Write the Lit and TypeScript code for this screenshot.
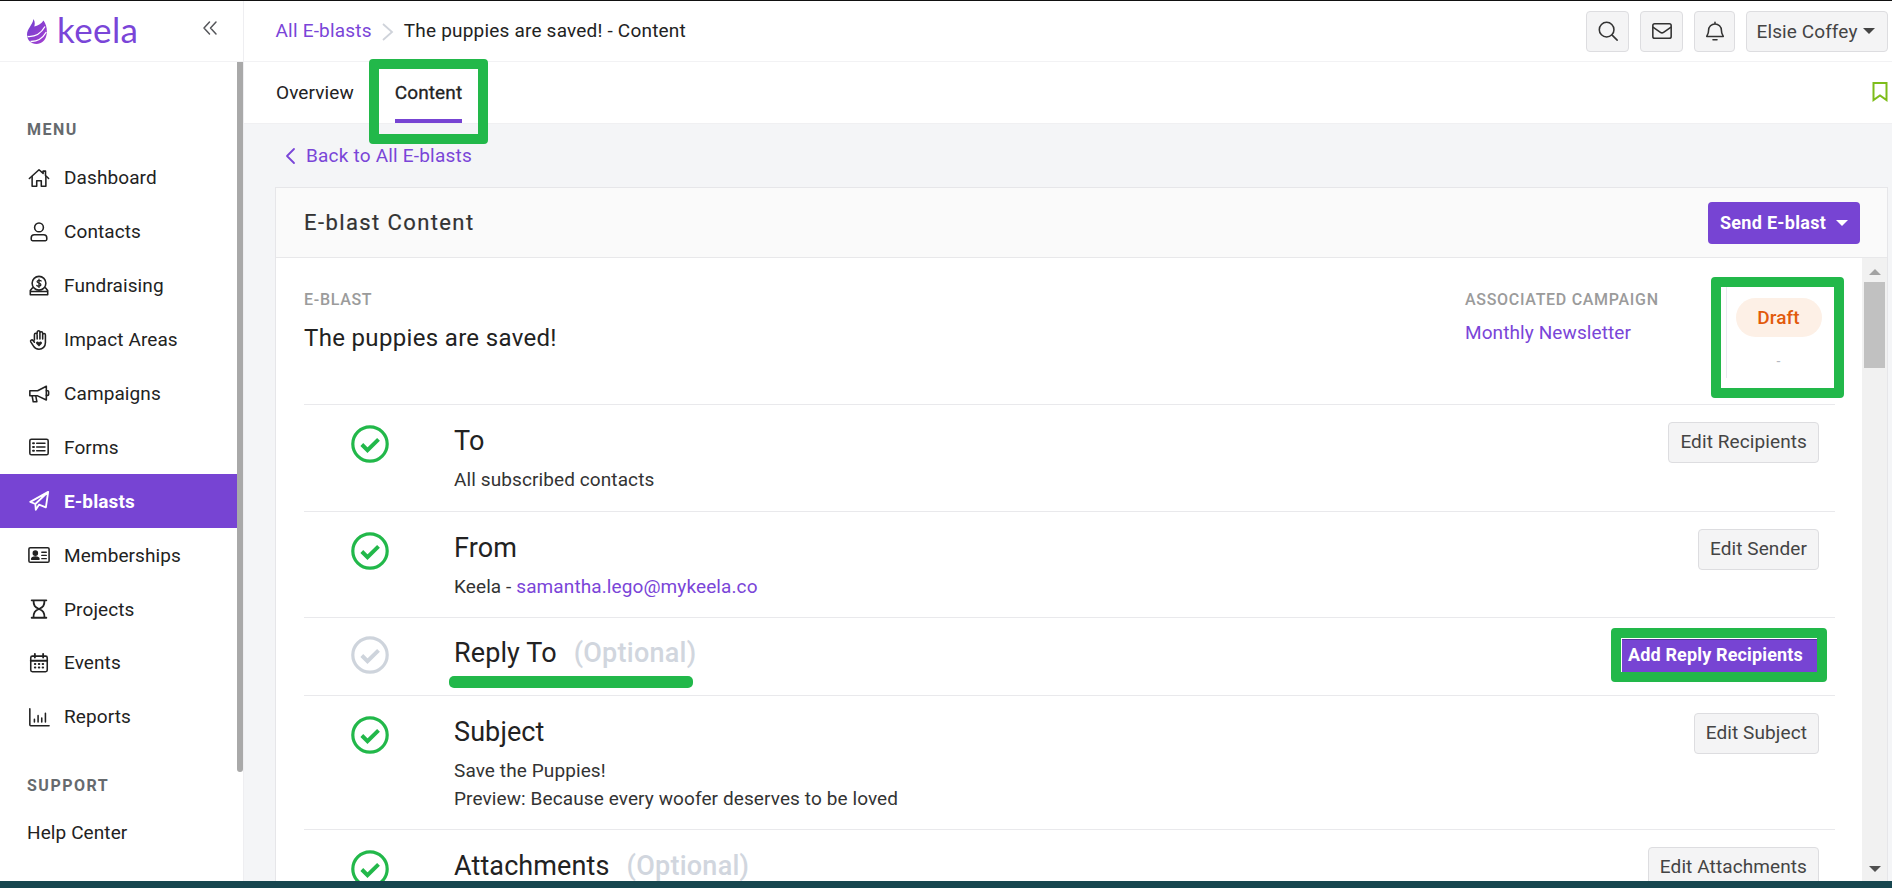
import { LitElement, html, css, svg } from "lit";
import { customElement } from "lit/decorators.js";

const S = (body: unknown, size = 22, cls = "") => html`<svg class=${cls} width=${size} height=${size} viewBox="0 0 24 24" fill="none" stroke="currentColor" stroke-width="1.7" stroke-linecap="round" stroke-linejoin="round">${body}</svg>`;

const icons: Record<string, unknown> = {
  home: svg`<path d="M1.5 12.5 12 3l4.500 4V4.500h2.600v4.800l3.400 3.200"/><path d="M4.500 10.500V21h5v-6h5v6h5V10.500"/>`,
  user: svg`<circle cx="12" cy="7" r="4.800"/><path d="M3.500 20v-1.500A3.500 3.500 0 0 1 7 15h10a3.500 3.500 0 0 1 3.500 3.500V20a1.500 1.500 0 0 1-1.500 1.500H5A1.500 1.500 0 0 1 3.500 20Z"/>`,
  money: svg`<circle cx="12" cy="9" r="7.500"/><path d="M14.300 6.500c-.6-.8-3.900-1.200-4.400.6-.5 2 4.400 1.600 4.200 3.700-.2 1.800-3.500 1.600-4.500.6M12 4.500v9" stroke-width="1.400"/><path d="M5 14l-2.500 3v4.500h19V17L19 14M2.500 18h19"/>`,
  hand: svg`<path d="M7 12V6.200a1.500 1.500 0 0 1 3 0V11M10 5V3.500a1.500 1.500 0 0 1 3 0V11M13 4.500a1.500 1.500 0 0 1 3 0V11M16 6.500a1.500 1.500 0 0 1 3 0V15c0 4-3 7-7 7-3 0-4.800-1.200-6-3.300L3 14c-.9-1.600 1.300-3 2.500-1.500L7 14.500"/><path d="M12 19l-3-3c-1.200-1.800 1.800-3.500 3-1.400 1.200-2.100 4.200-.4 3 1.400Z" fill="currentColor" stroke="none"/>`,
  megaphone: svg`<path d="M2 8.500h8.500L20 3.500v15l-9.500-4.500H2Z"/><path d="M4.500 14l1.200 6.500h4L8.500 14M20 8.500h1.500a1 1 0 0 1 1 1v3a1 1 0 0 1-1 1H20"/>`,
  form: svg`<rect x="2" y="3.500" width="20" height="17" rx="1.800"/><path d="M9.500 8h9M9.500 12h9M9.500 16h9" /><path d="M5.500 8h1M5.500 12h1M5.500 16h1" stroke-width="2.200"/>`,
  plane: svg`<path d="M22 2 2.500 13l5.500 2.300L22 2Zm0 0-2.500 17-7.500-3-3.500 5.500-.5-6.200" stroke-width="2"/>`,
  card: svg`<rect x="1" y="4" width="22" height="16" rx="1.500"/><circle cx="8" cy="10" r="2.200" fill="currentColor"/><path d="M4 16.500c.4-3 7.600-3 8 0Z" fill="currentColor"/><path d="M15 9h5M15 12.500h5M15 16h5" stroke-width="1.400"/>`,
  hourglass: svg`<path d="M4 2.500h16M4 21.500h16M6 2.500c0 6 1.500 7.500 6 9.500 4.500-2 6-3.500 6-9.500M6 21.500c0-6 1.500-7.500 6-9.500 4.500 2 6 3.500 6 9.500" stroke-width="2"/>`,
  calendar: svg`<rect x="3" y="4.500" width="18" height="17" rx="1.800"/><path d="M3 9.500h18M7.500 2v4M16.500 2v4" stroke-width="2"/><path d="M7.500 13h.5M11.800 13h.5M16 13h.5M7.500 17h.5M11.800 17h.5M16 17h.5" stroke-width="2.200"/>`,
  chart: svg`<path d="M2 3v17.500a1 1 0 0 0 1 1h20M7 14.500v3M11 10.500v7M15 13v4.500M19 8v9.500"/>`,
  search: svg`<circle cx="10.500" cy="10.500" r="8"/><path d="m16.500 16.500 5.500 5.500"/>`,
  mail: svg`<rect x="2" y="4" width="20" height="16" rx="2"/><path d="m2.500 8 7.800 5.500a3 3 0 0 0 3.400 0L21.500 8"/>`,
  bell: svg`<path d="M12 2.500v1.800M12 4.300a7 7 0 0 0-7 7c0 4.500-2 5.200-2 6.700h18c0-1.500-2-2.200-2-6.700a7 7 0 0 0-7-7ZM9.800 21.500h4.400"/>`,
};

const nav: [string, string][] = [
  ["home", "Dashboard"], ["user", "Contacts"], ["money", "Fundraising"], ["hand", "Impact Areas"],
  ["megaphone", "Campaigns"], ["form", "Forms"], ["plane", "E-blasts"], ["card", "Memberships"],
  ["hourglass", "Projects"], ["calendar", "Events"], ["chart", "Reports"],
];

const check = (muted = false) => html`<svg class="check ${muted ? "muted" : ""}" width="38" height="38" viewBox="0 0 38 38" fill="none" stroke="currentColor"><circle cx="19" cy="19" r="17.200" stroke-width="3.200"/><path d="m10.800 19.500 5.700 5.700 11-10.800" stroke-width="4"/></svg>`;

const caret = html`<span class="caret"></span>`;

@customElement("app-root")
export class AppRoot extends LitElement {
  static styles = css`
    :host { display: block; position: relative; width: 1892px; height: 888px; overflow: hidden; background: #fff; font-family: Roboto, "Noto Sans", sans-serif; color: #222; font-size: 19px; letter-spacing: .1px; }
    * { box-sizing: border-box; }
    a { color: #7a45d8; text-decoration: none; }
    .page { display: flex; flex-direction: column; height: 888px; border-top: 1px solid #111; }
    .main { display: flex; flex: 1; min-height: 0; }
    .bottom { height: 7px; flex: none; background: #17464f; }

    .side { width: 244px; flex: none; display: flex; flex-direction: column; border-right: 1px solid #eeeef1; }
    .brand { height: 61px; flex: none; display: flex; align-items: center; padding: 0 25px 0 27px; border-bottom: 1px solid #f2f2f4; }
    .logo { display: flex; }
    .word { font-family: Lato, sans-serif; font-size: 35px; color: #7a45d8; margin-left: 10px; letter-spacing: .4px; line-height: 1; margin-top: -3px; flex: 1; }
    .collapse { color: #55565a; font-size: 24px; display: flex; margin-top: -6px; }
    .side-body { flex: 1; display: flex; min-height: 0; }
    .nav { flex: 1; min-width: 0; padding-top: 58px; }
    .rail { width: 6px; flex: none; }
    .thumb { height: 710px; background: #a9a9a9; border-radius: 0 0 3px 3px; }
    .group { font-size: 16px; font-weight: 700; letter-spacing: 1.5px; color: #666a6e; padding-left: 27px; line-height: 20px; }
    .list { margin-top: 11px; }
    .item { height: 53.900px; display: flex; align-items: center; gap: 14px; padding-left: 28px; color: #222; }
    .item.active { background: #7744d3; color: #fff; font-weight: 700; }
    .group.support { margin-top: 32px; }
    .help { padding: 26px 0 0 27px; line-height: 21px; }

    .content { flex: 1; min-width: 0; display: flex; flex-direction: column; background: #f4f5f7; }
    .top { height: 61px; flex: none; background: #fff; border-bottom: 1px solid #f2f2f4; display: flex; align-items: center; padding: 0 4px 2px 31.500px; letter-spacing: .2px; }
    .crumb-sep { color: #cfd3da; margin: 3px 9px 0 9px; display: flex; }
    .here { flex: 1; color: #222; }
    .tool { height: 41px; width: 43px; margin: 2px 0 0 11px; display: flex; align-items: center; justify-content: center; background: #f4f4f5; border: 1px solid #dddde0; border-radius: 4px; color: #333; }
    .tool.bell { width: 41px; }
    .tool.user { width: 142px; gap: 6px; color: #444; letter-spacing: .1px; padding-right: 2px; }
    .caret { width: 0; height: 0; border: 6px solid transparent; border-top: 6px solid currentColor; border-bottom: 0; display: inline-block; }

    .tabs { height: 62px; flex: none; background: #fff; display: flex; gap: 41px; padding: 0 4px 0 32px; border-bottom: 1px solid #f0f0f2; }
    .tab { height: 61px; display: flex; align-items: center; padding-bottom: 0; color: #222; }
    .tab.on { border-bottom: 4px solid #7744d3; padding-top: 4px; -webkit-text-stroke: .3px #222; }
    .mark { margin-left: auto; margin-top: 20px; color: #7ebd1a; display: flex; }

    .area { flex: 1; min-height: 0; padding: 0 4px 0 31px; display: flex; flex-direction: column; }
    .back { height: 63px; flex: none; display: flex; align-items: center; gap: 10px; color: #7a45d8; padding: 0 0 0 10px; letter-spacing: .2px; }
    .card { flex: 1; min-height: 0; display: flex; flex-direction: column; background: #fff; border: 1px solid #e6e6e9; border-bottom: 0; overflow: hidden; }
    .card-head { height: 70px; flex: none; background: #fafafa; border-bottom: 1px solid #e8e8ea; display: flex; align-items: center; justify-content: space-between; padding: 0 27px 0 28px; }
    .card-head h2 { margin: 0; font-size: 22px; font-weight: 400; letter-spacing: 1.400px; color: #333; -webkit-text-stroke: .2px #333; }
    .send { height: 42px; width: 152px; background: #7744d3; color: #fff; font-weight: 700; border-radius: 4px; display: flex; align-items: center; justify-content: center; gap: 10px; font-size: 18px; letter-spacing: .3px; }
    .card-body { flex: 1; min-height: 0; display: flex; }
    .rows { flex: 1; min-width: 0; padding: 0 27px 0 28px; overflow: hidden; }
    .scroll { width: 25px; flex: none; background: #f1f1f1; display: flex; flex-direction: column; align-items: center; justify-content: space-between; }
    .up, .down { width: 0; height: 0; border: 6px solid transparent; }
    .up { border-bottom: 6px solid #a3a3a3; border-top: 0; margin-top: 11px; }
    .down { border-top: 6px solid #505050; border-bottom: 0; margin-bottom: 9px; }
    .sthumb { width: 21px; height: 86px; background: #c1c1c1; margin-top: 7px; }
    .sgap { flex: 1; }

    .meta { height: 147px; display: flex; border-bottom: 1px solid #e9e9ec; padding-top: 32px; }
    .label { font-size: 16px; font-weight: 500; letter-spacing: .7px; color: #9b9b9b; line-height: 20px; }
    .m-name { flex: 1; }
    .name { font-size: 24px; color: #222; line-height: 30px; margin-top: 13px; letter-spacing: .33px; }
    .m-camp { width: 261px; margin-left: -1px; }
    .camp { display: block; margin-top: 11px; line-height: 24px; }
    .m-status { width: 110px; border-left: 1px solid #e9e9f0; margin: -12px -1px 0 0; height: 100px; display: flex; flex-direction: column; align-items: center; padding: 20px 6px 0 0; }
    .pill { width: 86px; height: 39px; border-radius: 20px; background: #fdf0e6; color: #e25a0c; font-weight: 500; display: flex; align-items: center; justify-content: center; flex: none; }
    .dash { color: #b5b8c0; font-size: 14px; margin-top: 16px; }

    .row { display: flex; border-bottom: 1px solid #e9e9ec; padding: 18px 16px 17px 0; }
    .row.slim { padding: 15px 16px 18px 0; height: 78px; }
    .ico { width: 150px; flex: none; display: flex; justify-content: center; padding: 2px 18px 0 0; }
    .slim .ico { padding-top: 3px; }
    .check { color: #22b84a; }
    .check.muted { color: #ced4dc; }
    .txt { flex: 1; min-width: 0; }
    .title { font-size: 27px; line-height: 38px; color: #222; margin-top: -1px; }
    .slim .title { margin-top: 1px; }
    .opt { color: #d1d6de; font-weight: 500; margin-left: 17px; letter-spacing: .25px; }
    .line { line-height: 27.500px; margin-top: 6px; color: #333; }
    .line + .line { margin-top: 0; }
    .btn { height: 41px; margin-top: -1px; padding: 0 11px 2px; flex: none; display: flex; align-items: center; background: #f4f4f5; border: 1px solid #dddde0; border-radius: 4px; color: #444; }
    .btn.add { width: 196px; height: 33px; margin: 6px 1px 0 0; padding: 0 0 4px 6px; background: #7744d3; border: 0; border-top: 1px solid #55309e; border-radius: 0; color: #fff; font-weight: 700; font-size: 18px; letter-spacing: .15px; white-space: nowrap; }

    .hl { position: absolute; border: 10px solid #22b84a; border-radius: 4px; pointer-events: none; }
    .hl-tab { left: 369px; top: 59px; width: 119px; height: 85px; }
    .hl-status { left: 1711px; top: 277px; width: 133px; height: 121px; }
    .hl-add { left: 1611px; top: 628px; width: 216px; height: 54px; }
    .hl-bar { position: absolute; left: 449px; top: 676px; width: 244px; height: 12px; border-radius: 5px; background: #22b84a; }
  `;

  private row(title: string, lines: unknown[], btn: string, opts: { opt?: boolean; muted?: boolean; add?: boolean } = {}) {
    return html`<div class="row ${opts.add ? "slim" : ""}">
      <div class="ico">${check(opts.muted)}</div>
      <div class="txt">
        <div class="title">${title}${opts.opt ? html`<span class="opt">(Optional)</span>` : ""}</div>
        ${lines.map((l) => html`<div class="line">${l}</div>`)}
      </div>
      <div class="btn ${opts.add ? "add" : ""}">${btn}</div>
    </div>`;
  }

  render() {
    return html`
      <div class="page">
        <div class="main">
          <aside class="side">
            <div class="brand">
              <span class="logo"><svg width="20" height="25" viewBox="0 0 20 25"><defs><linearGradient id="fl" x1="0" y1="0" x2="1" y2="1"><stop offset="0" stop-color="#6f3fd0"/><stop offset="1" stop-color="#a63fd0"/></linearGradient></defs><path fill="url(#fl)" d="M6.500 0c1.500 2.500 1.500 5 .8 7.500C10.500 6.500 14.500 5 16.500 1.500 19.500 5.500 20.500 11 19.500 16c-1 5.500-5 9-10 9-5.500 0-9.500-4-9.500-9.500C0 10 5.500 6 6.500 0Z"/><path fill="none" stroke="#fff" stroke-width="1.300" d="M.5 17.500c7 .5 13.500-3 17.500-10M3.500 22.500c6 .2 12-3 15.800-9.500"/></svg></span>
              <span class="word">keela</span>
              <span class="collapse"><svg width="16" height="16" viewBox="0 0 16 16" fill="none" stroke="currentColor" stroke-width="1.500" stroke-linecap="round" stroke-linejoin="round"><path d="M7.500 2 2 8l5.500 6M14 2 8.500 8l5.500 6"/></svg></span>
            </div>
            <div class="side-body">
              <nav class="nav">
                <div class="group">MENU</div>
                <div class="list">
                  ${nav.map(([i, t]) => html`<div class="item ${t === "E-blasts" ? "active" : ""}">${S(icons[i])}<span>${t}</span></div>`)}
                </div>
                <div class="group support">SUPPORT</div>
                <div class="help">Help Center</div>
              </nav>
              <div class="rail"><div class="thumb"></div></div>
            </div>
          </aside>
          <section class="content">
            <header class="top">
              <a href="#">All E-blasts</a>
              <span class="crumb-sep"><svg width="14" height="20" viewBox="0 0 14 20" fill="none" stroke="currentColor" stroke-width="1.800"><path d="m2 2 9 8-9 8"/></svg></span>
              <span class="here">The puppies are saved! - Content</span>
              <div class="tool">${S(icons.search, 22)}</div>
              <div class="tool">${S(icons.mail, 22)}</div>
              <div class="tool bell">${S(icons.bell, 22)}</div>
              <div class="tool user">Elsie Coffey ${caret}</div>
            </header>
            <div class="tabs">
              <div class="tab">Overview</div>
              <div class="tab on">Content</div>
              <span class="mark"><svg width="16" height="20" viewBox="0 0 16 20" fill="none" stroke="currentColor" stroke-width="2"><path d="M1.500 1h13v17L8 13.500 1.500 18Z"/></svg></span>
            </div>
            <div class="area">
              <a class="back" href="#"><svg width="11" height="18" viewBox="0 0 11 18" fill="none" stroke="currentColor" stroke-width="1.800" stroke-linecap="round" stroke-linejoin="round"><path d="M9 2 2 9l7 7"/></svg><span>Back to All E-blasts</span></a>
              <div class="card">
                <div class="card-head">
                  <h2>E-blast Content</h2>
                  <div class="send">Send E-blast ${caret}</div>
                </div>
                <div class="card-body">
                  <div class="rows">
                    <div class="meta">
                      <div class="m-name"><div class="label">E-BLAST</div><div class="name">The puppies are saved!</div></div>
                      <div class="m-camp"><div class="label">ASSOCIATED CAMPAIGN</div><a class="camp" href="#">Monthly Newsletter</a></div>
                      <div class="m-status"><div class="pill">Draft</div><div class="dash">-</div></div>
                    </div>
                    ${this.row("To", ["All subscribed contacts"], "Edit Recipients")}
                    ${this.row("From", [html`Keela - <a href="#">samantha.lego@mykeela.co</a>`], "Edit Sender")}
                    ${this.row("Reply To", [], "Add Reply Recipients", { opt: true, muted: true, add: true })}
                    ${this.row("Subject", ["Save the Puppies!", "Preview: Because every woofer deserves to be loved"], "Edit Subject")}
                    ${this.row("Attachments", [], "Edit Attachments", { opt: true })}
                  </div>
                  <div class="scroll">
                    <div class="up"></div>
                    <div class="sthumb"></div>
                    <div class="sgap"></div>
                    <div class="down"></div>
                  </div>
                </div>
              </div>
            </div>
          </section>
        </div>
        <div class="bottom"></div>
      </div>
      <div class="hl hl-tab"></div>
      <div class="hl hl-status"></div>
      <div class="hl hl-add"></div>
      <div class="hl-bar"></div>
    `;
  }
}
